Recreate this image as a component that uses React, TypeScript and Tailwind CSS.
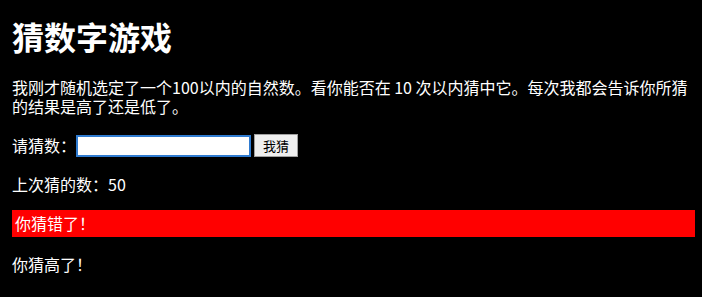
import React from "react";

export default function App() {
  return (
    <div
      className="min-h-screen w-full bg-black text-white pl-[12px] pr-[7px] pt-[16px]"
      style={{ fontFamily: '"Noto Sans CJK SC", "Noto Sans", sans-serif' }}
    >
      <h1 className="text-[32px] font-bold leading-[40px] m-0">猜数字游戏</h1>
      <p className="mt-[22px] text-[16px] leading-[19px]">
        我刚才随机选定了一个100以内的自然数。看你能否在 10 次以内猜中它。每次我都会告诉你所猜的结果是高了还是低了。
      </p>
      <div className="mt-[18px] flex items-center h-[23px] text-[16px]">
        <label className="leading-[19px]">请猜数：</label>
        <input
          type="text"
          className="ml-0 w-[175px] h-[22px] bg-white border-2 border-[#2f7bd0] outline-none text-black"
        />
        <button className="ml-[3px] w-[44px] h-[23px] bg-[#efefef] border border-[#a0a0a0] text-[13px] text-black leading-none flex items-center justify-center">
          我猜
        </button>
      </div>
      <div className="mt-[18px] text-[16px] leading-[19px]">上次猜的数：50</div>
      <div className="mt-[16px] h-[27px] bg-[#ff0000] text-[16px] leading-[27px] pl-[3px]">
        你猜错了！
      </div>
      <div className="mt-[18px] text-[16px] leading-[19px]">你猜高了！</div>
    </div>
  );
}
